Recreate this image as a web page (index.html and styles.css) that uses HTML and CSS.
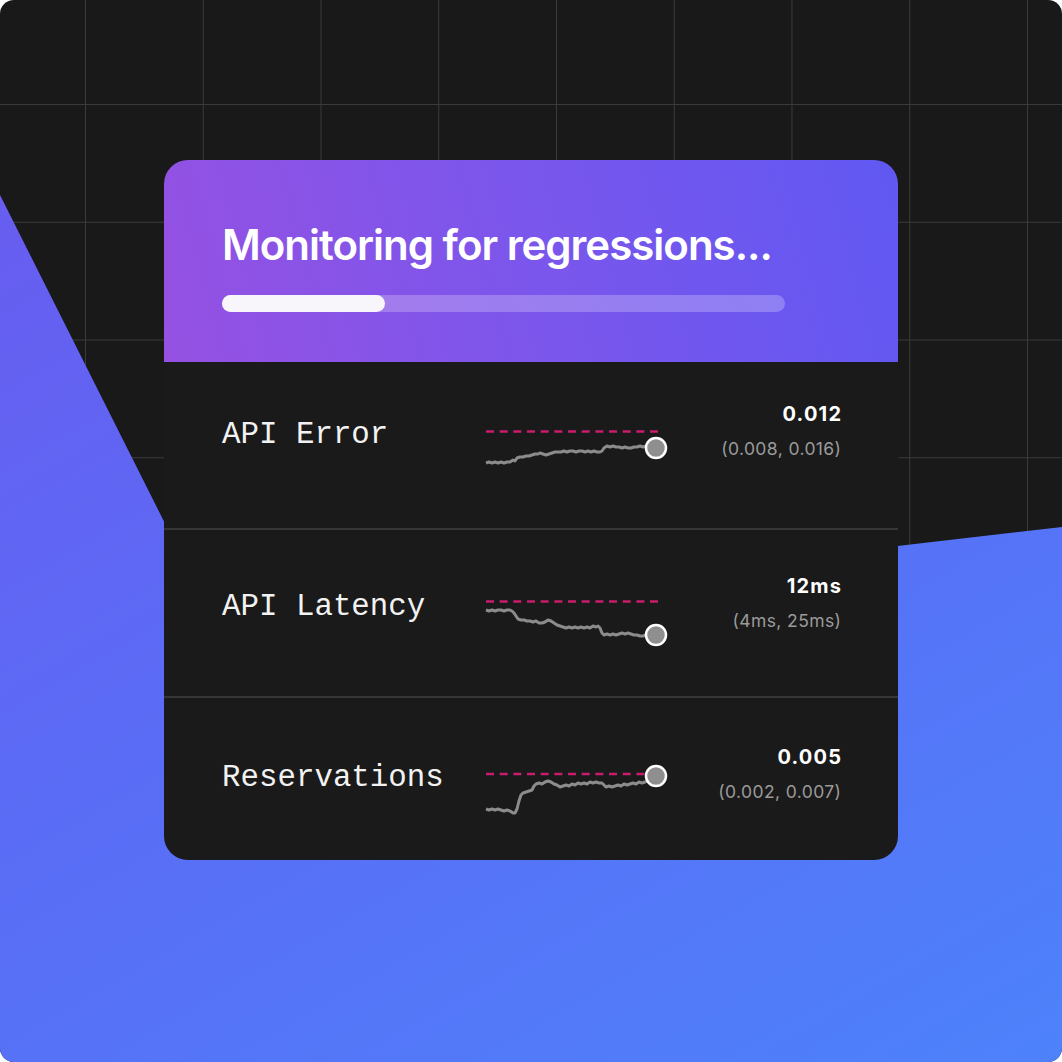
FILE: index.html
```html
<!DOCTYPE html>
<html lang="en">
<head>
    <meta charset="UTF-8">
    <meta name="viewport" content="width=device-width, initial-scale=1.0">
    <title>Monitoring for regressions</title>
    <link rel="stylesheet" href="styles.css">
</head>
<body>
    <div class="frame">
        <div class="wedge"></div>

        <div class="card">
            <div class="card-head">
                <h1>Monitoring for regressions...</h1>
                <div class="progress">
                    <div class="progress-fill" style="width: 29%"></div>
                </div>
            </div>

            <div class="metric">
                <div class="metric-name">API Error</div>
                <svg class="spark" width="184" height="80" viewBox="0 0 184 80">
                    <line class="limit" x1="0" y1="37.5" x2="172" y2="37.5"/>
                    <polyline class="trend" points="0,69 3,68 6,69 9,68 12,69 15,68 18,69 21,68 24,68 27,66 29,67 31,64 34,63 37,63 40,62 43,62 46,61 49,60 52,60 54,59 57,60 60,61 63,60 66,59 69,58 72,58 75,58 78,57 81,58 84,57 87,57 90,58 93,57 96,57 99,58 102,57 105,58 108,57 111,58 114,58 116,57 118,54 121,52 124,53 127,52 130,53 133,53 136,54 139,53 142,54 145,54 148,53 151,53 154,52 157,53 160,52 164,53 170,54"/>
                    <circle class="now" cx="170" cy="54" r="10"/>
                </svg>
                <div class="metric-value">
                    <strong>0.012</strong>
                    <span>(0.008, 0.016)</span>
                </div>
            </div>

            <div class="metric">
                <div class="metric-name">API Latency</div>
                <svg class="spark" width="184" height="80" viewBox="0 0 184 80">
                    <line class="limit" x1="0" y1="35.5" x2="172" y2="35.5"/>
                    <polyline class="trend" points="0,44 3,45 6,44 9,45 12,44 15,44 18,45 21,44 24,44 26,45 28,47 30,50 32,53 35,54 38,54 41,55 44,55 47,56 50,55 53,57 56,57 59,56 62,54 65,55 68,57 71,59 74,60 77,61 80,62 83,61 86,62 89,61 92,62 95,61 98,62 101,61 104,62 107,60 110,61 112,60 114,62 116,67 118,69 121,68 124,69 127,68 130,69 133,68 136,67 139,68 142,67 145,68 148,69 151,69 154,70 157,70 160,69 164,70 170,69"/>
                    <circle class="now" cx="170" cy="69" r="10"/>
                </svg>
                <div class="metric-value">
                    <strong>12ms</strong>
                    <span>(4ms, 25ms)</span>
                </div>
            </div>

            <div class="metric">
                <div class="metric-name">Reservations</div>
                <svg class="spark" width="184" height="80" viewBox="0 0 184 80">
                    <line class="limit" x1="0" y1="37" x2="172" y2="37"/>
                    <polyline class="trend" points="0,72 3,73 6,72 9,73 12,72 15,73 18,74 21,73 24,74 27,76 29,76 31,72 33,64 35,58 37,56 40,55 43,54 46,53 48,49 50,47 53,46 56,47 59,45 62,44 65,45 68,47 71,48 74,50 77,49 80,48 83,49 86,47 89,48 92,46 95,47 98,46 101,47 104,45 107,46 110,45 113,46 116,46 118,48 120,50 123,49 126,50 129,49 132,48 135,49 138,47 141,48 144,47 147,46 150,47 153,45 156,46 159,45 163,43 170,39"/>
                    <circle class="now" cx="170" cy="39" r="10"/>
                </svg>
                <div class="metric-value">
                    <strong>0.005</strong>
                    <span>(0.002, 0.007)</span>
                </div>
            </div>
        </div>
    </div>
</body>
</html>
```

FILE: styles.css
```css
html, body {
    margin: 0;
    padding: 0;
    background: #fff;
}

.frame {
    position: relative;
    width: 1062px;
    height: 1062px;
    border-radius: 14px;
    overflow: hidden;
    box-sizing: border-box;
    padding-top: 160px;
    display: flex;
    justify-content: center;
    align-items: flex-start;
    background-color: #191919;
    background-image:
        linear-gradient(to right, #3a3a3a 1px, transparent 1px),
        linear-gradient(to bottom, #3a3a3a 1px, transparent 1px);
    background-size: 117.75px 117.75px;
    background-position: 85px 104px;
}

/* blue slab behind the card */
.wedge {
    position: absolute;
    inset: 0;
    background: linear-gradient(150deg, #6c58ee 0%, #5a6cf5 50%, #4d82fb 100%);
    clip-path: polygon(0 195px, 216px 625px, 1062px 527px, 1062px 1062px, 0 1062px);
}

.card {
    position: relative;
    width: 734px;
    height: 700px;
    border-radius: 24px;
    overflow: hidden;
    background: #1a1a1a;
}

.card-head {
    height: 202px;
    box-sizing: border-box;
    padding: 60px 113px 0 58px;
    background: linear-gradient(75deg, #9551e2 0%, #7b56ec 50%, #6058f2 100%);
}

.card-head h1 {
    margin: 0;
    font-family: Inter, "Noto Sans", sans-serif;
    font-weight: 600;
    font-size: 42px;
    line-height: 50px;
    letter-spacing: -1px;
    color: #fff;
    white-space: nowrap;
}

.progress {
    margin-top: 25px;
    height: 17px;
    border-radius: 9px;
    background: rgba(255, 255, 255, 0.24);
}

.progress-fill {
    height: 100%;
    border-radius: 9px;
    background: #f8f6fb;
}

.metric {
    height: 168px;
    display: flex;
    align-items: flex-start;
    box-sizing: border-box;
    padding: 36px 57px 0 58px;
    border-top: 2px solid #363636;
}

.card-head + .metric {
    height: 166px;
    border-top: none;
    padding-top: 32px;
}

.metric:last-child {
    height: 164px;
    padding-top: 39px;
}

.metric-name {
    width: 264px;
    height: 80px;
    display: flex;
    align-items: center;
    font-family: "Liberation Mono", "DejaVu Sans Mono", monospace;
    font-size: 30.8px;
    color: #f2f2f2;
}

.spark {
    display: block;
    overflow: visible;
}

.limit {
    stroke: #c81d6c;
    stroke-width: 2.5;
    stroke-dasharray: 8 5.67;
}

.trend {
    fill: none;
    stroke: #8c8c8c;
    stroke-width: 3;
    stroke-linejoin: round;
}

.now {
    fill: #8f8f8f;
    stroke: #fff;
    stroke-width: 2.5;
}

.metric-value {
    margin-left: auto;
    height: 80px;
    box-sizing: border-box;
    padding-bottom: 6px;
    display: flex;
    flex-direction: column;
    justify-content: center;
    align-items: flex-end;
    gap: 13px;
    font-family: Inter, "Noto Sans", sans-serif;
    line-height: 22px;
}

.metric-value strong {
    font-size: 20px;
    font-weight: 700;
    letter-spacing: 1.2px;
    margin-right: -1.2px;
    color: #fff;
}

.metric-value span {
    font-size: 17.5px;
    letter-spacing: 0.4px;
    margin-right: -0.4px;
    color: #9a9a9a;
}
```
